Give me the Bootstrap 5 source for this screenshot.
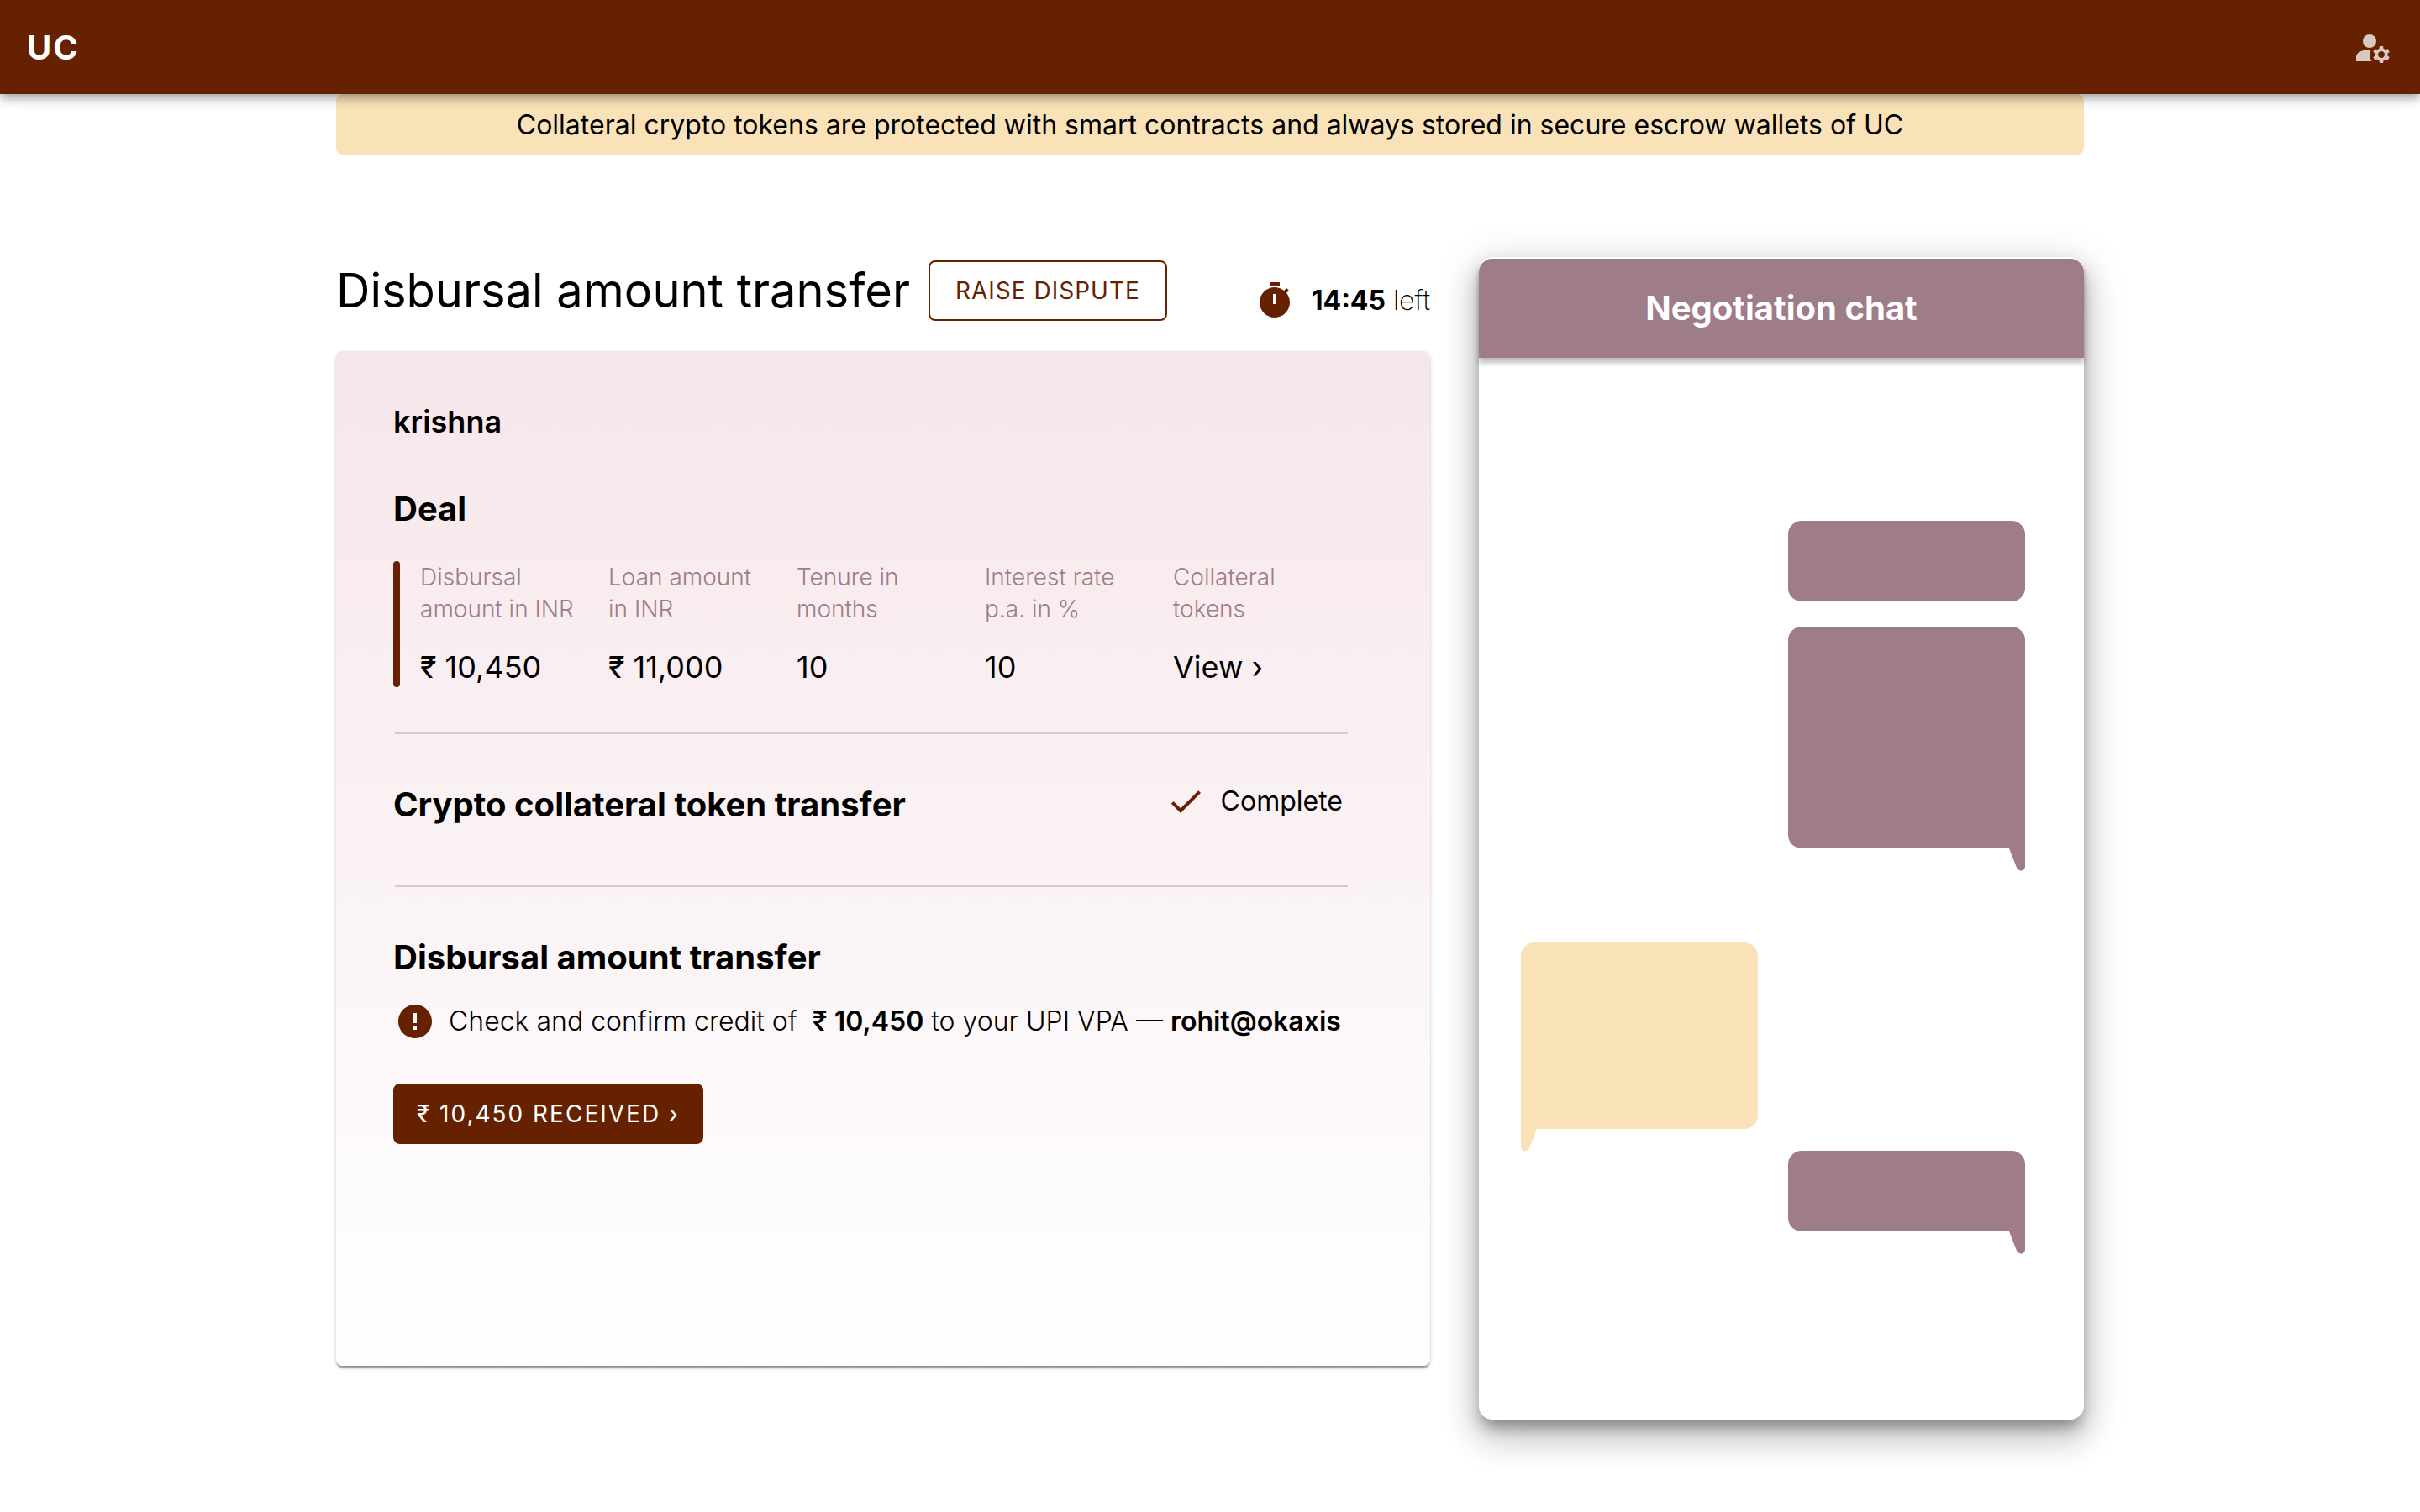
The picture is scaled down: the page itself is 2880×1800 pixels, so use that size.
<!DOCTYPE html>
<html lang="en">
<head>
<meta charset="utf-8">
<meta name="viewport" content="width=device-width, initial-scale=1">
<title>UC – Disbursal amount transfer</title>
<link href="https://cdn.jsdelivr.net/npm/bootstrap@5.3.0/dist/css/bootstrap.min.css" rel="stylesheet">
<style>
  :root {
    --uc-brown: #662200;
    --uc-mauve: #9e7c88;
    --uc-cream: #fae2b8;
    --uc-line: #dcc6cf;
  }
  body { font-family: Inter, "Liberation Sans", sans-serif; font-size: 32px; line-height: 48px; color: #000; background: #fff; min-height: 100vh; }
  b { font-weight: 600; }
  .uc-nav { background: var(--uc-brown); height: 112px; padding: 2px 32px 0; z-index: 2;
    box-shadow: 0 4px 8px -2px rgba(0,0,0,.2), 0 8px 10px rgba(0,0,0,.14), 0 2px 20px rgba(0,0,0,.12); }
  .uc-brand { font-size: 40px; line-height: 56px; font-weight: 700; letter-spacing: 2px; color: #fff; }
  .uc-icon { width: 48px; height: 48px; fill: var(--uc-brown); flex: none; display: block; }
  .uc-nav .uc-icon { fill: #dbc8bf; }
  .uc-wrap { max-width: 2080px; padding-bottom: 110px; }
  .uc-banner { background: var(--uc-cream); border-radius: 8px; padding: 13px 32px 11px; }
  .uc-main { margin-top: 122px; gap: 58px; }
  .uc-left { padding-top: 4px; min-width: 0; }
  .uc-head { gap: 22px; }
  .uc-title { font-size: 56px; line-height: 72px; font-weight: 400; }
  .uc-btn { height: 72px; padding: 0 30px; font-size: 28px; line-height: 40px; font-weight: 400; letter-spacing: 1px;
    border: 2px solid var(--uc-brown); border-radius: 8px; color: var(--uc-brown); background: #fff; text-transform: uppercase; }
  .uc-btn-fill { background: var(--uc-brown); color: #fff; letter-spacing: 2px; padding: 0 26px; }
  .uc-light { font-weight: 300; }
  .uc-timer { gap: 20px; font-weight: 200; }
  .uc-timer b { font-weight: 700; }
  .uc-panel { margin-top: 36px; min-height: 1208px; padding: 62px 98px 62px 68px; border-radius: 8px;
    background: linear-gradient(#f6e6ea, #fff);
    box-shadow: 0 4px 2px -1px rgba(0,0,0,.26), 0 2px 2px rgba(0,0,0,.14), 0 2px 6px rgba(0,0,0,.12); }
  .uc-name { font-size: 36px; line-height: 44px; font-weight: 600; }
  .uc-h { font-size: 40px; line-height: 56px; font-weight: 700; }
  .uc-deal-title { margin: 54px 0 34px; }
  .uc-deal { gap: 24px; }
  .uc-bar { width: 8px; border-radius: 4px; background: var(--uc-brown); flex: none; }
  .uc-grid { display: grid; grid-template-columns: repeat(5, 224px); padding: 0 0 2px; }
  .uc-grid dt { font-size: 28px; line-height: 38px; font-weight: 300; color: var(--uc-mauve); }
  .uc-grid dd { font-size: 36px; line-height: 44px; margin: 28px 0 0; }
  .uc-rule { height: 2px; border: 0; opacity: 1; background: var(--uc-line); margin: 54px 0 56px 2px; }
  .uc-rule-b { margin-top: 68px; }
  .uc-status { gap: 18px; padding-right: 6px; }
  .uc-note { gap: 16px; padding-left: 2px; margin-bottom: 50px; }
  .uc-chat { width: 720px; flex: none; padding-top: 2px; border-radius: 16px; background: #fff;
    box-shadow: 0 14px 16px -8px rgba(0,0,0,.2), 0 24px 38px 3px rgba(0,0,0,.14), 0 9px 46px 8px rgba(0,0,0,.12), 0 10px 18px rgba(0,0,0,.18); }
  .uc-chat-head { background: var(--uc-mauve); color: #fff; padding: 31px 24px; border-radius: 16px 16px 0 0;
    box-shadow: 0 6px 6px rgba(0,0,0,.26); }
  .uc-thread { padding: 194px 70px 224px 50px; }
  .uc-bubble { position: relative; width: 47%; border-radius: 16px; background: var(--uc-mauve); }
  .uc-mine { align-self: flex-end; }
  .uc-theirs { background: var(--uc-cream); }
  .uc-tail::after { content: ""; position: absolute; top: 100%; width: 19px; height: 27px; background: inherit;
    clip-path: path("M0 0H19V21C19 28 11 28 9 23Z"); }
  .uc-mine.uc-tail { border-bottom-right-radius: 0; }
  .uc-mine.uc-tail::after { right: 0; }
  .uc-theirs.uc-tail { border-bottom-left-radius: 0; }
  .uc-theirs.uc-tail::after { left: 0; transform: scaleX(-1); }
  .uc-size-s { height: 96px; }
  .uc-size-m { height: 222px; margin: 112px 0 26px; }
  .uc-size-l { height: 264px; margin-top: 30px; }
</style>
<script src="https://cdn.jsdelivr.net/npm/bootstrap@5.3.0/dist/js/bootstrap.bundle.min.js"></script>
</head>
<body>
<header class="uc-nav d-flex align-items-center justify-content-between position-relative">
  <a href="#" class="uc-brand text-decoration-none">UC</a>
  <button type="button" class="btn p-0 border-0" aria-label="Account settings">
    <svg class="uc-icon" viewBox="0 0 24 24"><circle cx="10" cy="8" r="4"/><path d="M10.67 13.02c-.22-.01-.44-.02-.67-.02-2.42 0-4.68.67-6.61 1.82-.88.52-1.39 1.5-1.39 2.53V20h9.26c-.79-1.13-1.26-2.51-1.26-4 0-1.07.25-2.07.67-2.98zM20.75 16c0-.22-.03-.42-.06-.63l1.14-1.01-1-1.73-1.45.49c-.32-.27-.68-.48-1.08-.63L18 11h-2l-.3 1.49c-.4.15-.76.36-1.08.63l-1.45-.49-1 1.73 1.14 1.01c-.03.21-.06.41-.06.63s.03.42.06.63l-1.14 1.01 1 1.73 1.45-.49c.32.27.68.48 1.08.63L16 21h2l.3-1.49c.4-.15.76-.36 1.08-.63l1.45.49 1-1.73-1.14-1.01c.03-.21.06-.41.06-.63zM17 18c-1.1 0-2-.9-2-2s.9-2 2-2 2 .9 2 2-.9 2-2 2z"/></svg>
  </button>
</header>

<div class="uc-wrap mx-auto">
  <div class="uc-banner text-center">Collateral crypto tokens are protected with smart contracts and always stored in secure escrow wallets of UC</div>

  <main class="uc-main d-flex align-items-start">
    <section class="uc-left flex-grow-1">
      <div class="d-flex align-items-center justify-content-between">
        <div class="uc-head d-flex align-items-center">
          <h1 class="uc-title mb-0">Disbursal amount transfer</h1>
          <button type="button" class="btn uc-btn">Raise dispute</button>
        </div>
        <div class="uc-timer d-flex align-items-center align-self-end">
          <svg class="uc-icon" viewBox="0 0 24 24"><path d="M9 1h6v2H9zm10.03 6.39 1.42-1.42c-.43-.51-.9-.99-1.41-1.41l-1.42 1.42C16.07 4.74 14.12 4 12 4c-4.97 0-9 4.03-9 9s4.02 9 9 9 9-4.03 9-9c0-2.12-.74-4.07-1.97-5.61zM13 14h-2V8h2v6z"/></svg>
          <span><b>14:45</b> left</span>
        </div>
      </div>

      <div class="uc-panel">
        <div class="uc-name">krishna</div>
        <h2 class="uc-h uc-deal-title">Deal</h2>
        <div class="uc-deal d-flex">
          <span class="uc-bar"></span>
          <dl class="uc-grid mb-0">
            <div><dt>Disbursal<br>amount in INR</dt><dd>₹ 10,450</dd></div>
            <div><dt>Loan amount<br>in INR</dt><dd>₹ 11,000</dd></div>
            <div><dt>Tenure in<br>months</dt><dd>10</dd></div>
            <div><dt>Interest rate<br>p.a. in %</dt><dd>10</dd></div>
            <div><dt>Collateral<br>tokens</dt><dd><a href="#" class="text-reset text-decoration-none">View ›</a></dd></div>
          </dl>
        </div>

        <hr class="uc-rule">
        <div class="d-flex justify-content-between align-items-start">
          <h2 class="uc-h mb-0">Crypto collateral token transfer</h2>
          <div class="uc-status d-flex align-items-center">
            <svg class="uc-icon" viewBox="0 0 24 24"><path d="M9 16.17 4.83 12l-1.42 1.41L9 19 21 7l-1.41-1.41z"/></svg>
            <span>Complete</span>
          </div>
        </div>

        <hr class="uc-rule uc-rule-b">
        <h2 class="uc-h mb-4">Disbursal amount transfer</h2>
        <div class="uc-note d-flex align-items-center">
          <svg class="uc-icon" viewBox="0 0 24 24"><path d="M12 2C6.48 2 2 6.48 2 12s4.48 10 10 10 10-4.48 10-10S17.52 2 12 2zm1 15h-2v-2h2v2zm0-4h-2V7h2v6z"/></svg>
          <span class="uc-light">Check and confirm credit of &nbsp;<b>₹ 10,450</b> to your UPI VPA — <b>rohit@okaxis</b></span>
        </div>
        <button type="button" class="btn uc-btn uc-btn-fill">₹ 10,450 received ›</button>
      </div>
    </section>

    <aside class="uc-chat">
      <h2 class="uc-chat-head uc-h text-center mb-0">Negotiation chat</h2>
      <div class="uc-thread d-flex flex-column">
        <div class="uc-bubble uc-mine uc-size-s"></div>
        <div class="uc-bubble uc-mine uc-tail uc-size-l"></div>
        <div class="uc-bubble uc-theirs uc-tail uc-size-m"></div>
        <div class="uc-bubble uc-mine uc-tail uc-size-s"></div>
      </div>
    </aside>
  </main>
</div>
</body>
</html>
